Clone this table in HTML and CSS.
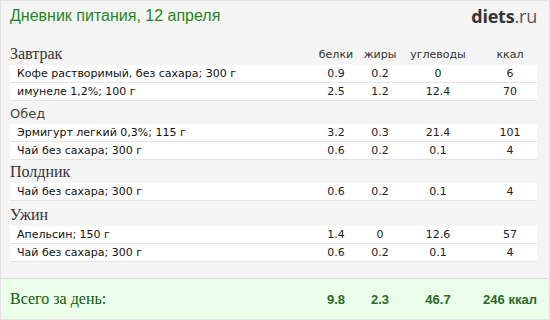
FILE: index.html
```html
<!DOCTYPE html>
<html lang="ru">
<head>
<meta charset="utf-8">
<title>Дневник питания</title>
<link rel="stylesheet" href="styles.css">
</head>
<body>
<div class="page">
  <header class="top">
    <h1 class="title">Дневник питания, 12 апреля</h1>
    <div class="logo"><span class="logo-main">diets</span><span class="logo-tld">.ru</span></div>
  </header>

  <div class="diary">
    <div class="sec sec-first">
      <div class="sec-name serif">Завтрак</div>
      <div class="cell">белки</div>
      <div class="cell">жиры</div>
      <div class="cell c3">углеводы</div>
      <div class="cell">ккал</div>
    </div>
    <div class="row"><div class="name">Кофе растворимый, без сахара; 300 г</div><div class="cell">0.9</div><div class="cell">0.2</div><div class="cell c3">0</div><div class="cell">6</div></div>
    <div class="row"><div class="name">имунеле 1,2%; 100 г</div><div class="cell">2.5</div><div class="cell">1.2</div><div class="cell c3">12.4</div><div class="cell">70</div></div>

    <div class="sec"><div class="sec-name sans">Обед</div></div>
    <div class="row"><div class="name">Эрмигурт легкий 0,3%; 115 г</div><div class="cell">3.2</div><div class="cell">0.3</div><div class="cell c3">21.4</div><div class="cell">101</div></div>
    <div class="row"><div class="name">Чай без сахара; 300 г</div><div class="cell">0.6</div><div class="cell">0.2</div><div class="cell c3">0.1</div><div class="cell">4</div></div>

    <div class="sec"><div class="sec-name serif">Полдник</div></div>
    <div class="row"><div class="name">Чай без сахара; 300 г</div><div class="cell">0.6</div><div class="cell">0.2</div><div class="cell c3">0.1</div><div class="cell">4</div></div>

    <div class="sec sec-tall"><div class="sec-name serif">Ужин</div></div>
    <div class="row"><div class="name">Апельсин; 150 г</div><div class="cell">1.4</div><div class="cell">0</div><div class="cell c3">12.6</div><div class="cell">57</div></div>
    <div class="row"><div class="name">Чай без сахара; 300 г</div><div class="cell">0.6</div><div class="cell">0.2</div><div class="cell c3">0.1</div><div class="cell">4</div></div>
  </div>

  <footer class="total">
    <div class="total-label">Всего за день:</div>
    <div class="tcell">9.8</div>
    <div class="tcell">2.3</div>
    <div class="tcell c3">46.7</div>
    <div class="tcell">246 ккал</div>
  </footer>
</div>
</body>
</html>
```

FILE: styles.css
```css
* { box-sizing: border-box; }

html, body {
  margin: 0;
  padding: 0;
  background: #ffffff;
}

.page {
  width: 550px;
  height: 320px;
  border: 1px solid #e2e2e2;
  background: #f5f5f5;
  display: flex;
  flex-direction: column;
  font-family: "DejaVu Sans", Verdana, sans-serif;
  color: #222;
}

.top {
  height: 41px;
  display: flex;
  justify-content: space-between;
  align-items: flex-start;
  padding: 5px 12px 0 9px;
}

.title {
  margin: 0;
  font-family: "Liberation Sans", Arial, sans-serif;
  font-weight: normal;
  font-size: 16px;
  line-height: 20px;
  color: #1f861f;
}

.logo {
  font-family: "Open Sans", "Liberation Sans", sans-serif;
  font-size: 18px;
  line-height: 20px;
  letter-spacing: -0.2px;
}

.logo-main {
  font-weight: 700;
  color: #333;
}

.logo-tld {
  font-weight: 400;
  color: #555;
}

.diary {
  padding: 0 12px 0 9px;
  display: flex;
  flex-direction: column;
}

.sec,
.row {
  display: grid;
  grid-template-columns: 1fr 44px 44px 81px 54px;
}

.sec {
  height: 23px;
  align-items: end;
}

.sec-first {
  height: 23px;
}

.sec-tall {
  height: 25px;
}

.sec-name {
  color: #333;
  line-height: 20px;
}

.serif {
  font-family: "Liberation Serif", Georgia, serif;
  font-size: 16px;
  padding-bottom: 1px;
}

.sans {
  font-family: "DejaVu Sans", Verdana, sans-serif;
  font-size: 13px;
  color: #444;
}

.sec .cell {
  font-size: 11px;
  line-height: 16px;
  color: #333;
  padding-bottom: 2px;
}

.row {
  height: 18px;
  background: #fff;
  border-bottom: 1px solid #e4e4e4;
  align-items: center;
  font-size: 11px;
  line-height: 17px;
}

.name {
  padding-left: 7px;
  white-space: nowrap;
  color: #111;
}

.cell {
  text-align: center;
  font-size: 11px;
  white-space: nowrap;
}

.c3 {
  padding-right: 9px;
}

.total {
  margin-top: auto;
  height: 41px;
  border-top: 1px solid #dcdcdc;
  background: #eafeea;
  display: grid;
  grid-template-columns: 1fr 44px 44px 81px 54px;
  align-items: center;
  padding: 0 12px 0 9px;
}

.total-label {
  font-family: "Liberation Serif", Georgia, serif;
  font-size: 16px;
  color: #0b5a0b;
}

.tcell {
  text-align: center;
  font-family: "Liberation Sans", Arial, sans-serif;
  font-weight: bold;
  font-size: 13px;
  color: #2b6a2b;
  white-space: nowrap;
}
```
